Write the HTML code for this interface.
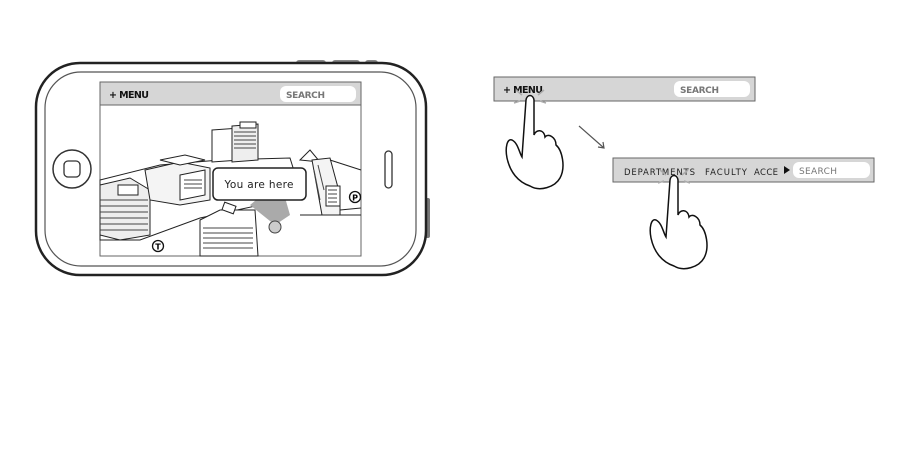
<!DOCTYPE html>
<html><head><style>
body{margin:0;width:918px;height:450px;background:#fff;overflow:hidden;font-family:"DejaVu Sans","Liberation Sans",sans-serif}
</style></head><body>
<svg width="918" height="450" viewBox="0 0 918 450" xmlns="http://www.w3.org/2000/svg" style="position:absolute;left:0;top:0">
<rect x="296" y="60" width="30" height="6" rx="3" fill="#888"/>
<rect x="332" y="60" width="28" height="6" rx="3" fill="#888"/>
<rect x="365" y="60" width="13" height="6" rx="3" fill="#888"/>
<rect x="424" y="198" width="6" height="40" rx="2" fill="#777"/>
<rect x="36" y="63" width="390" height="212" rx="44" fill="#fff" stroke="#222" stroke-width="2.5"/>
<rect x="45" y="72" width="371" height="194" rx="36" fill="#fff" stroke="#555" stroke-width="1.2"/>
<circle cx="72" cy="169" r="19" fill="#fff" stroke="#333" stroke-width="1.5"/>
<rect x="64" y="161" width="16" height="16" rx="4" fill="none" stroke="#333" stroke-width="1.3"/>
<rect x="385" y="151" width="7" height="37" rx="3.5" fill="#fff" stroke="#333" stroke-width="1.3"/>
<rect x="100" y="82" width="261" height="174" fill="#fff" stroke="#666"/>
<rect x="100" y="82" width="261" height="23" fill="#d6d6d6" stroke="#666"/>
<rect x="280" y="86" width="76" height="16" rx="6" fill="#fff"/>
<text x="109" y="98" font-size="9.5" font-weight="bold" fill="#111" textLength="40">+ MENU</text>
<text x="286" y="98" font-size="9" font-weight="bold" fill="#777" textLength="39">SEARCH</text>
<g fill="#fff" stroke="#222" stroke-width="1">
<path d="M100 180 L160 165 L220 160 L290 158 L300 190 L260 205 L200 218 L140 240 L100 240Z"/>
<path d="M100 185 L130 178 L150 190 L150 235 L120 240 L100 235Z" fill="#eee"/>
<path d="M100 200 h48 M100 206 h48 M100 212 h48 M100 218 h48 M100 224 h48 M100 230 h48" stroke="#444"/>
<rect x="118" y="185" width="20" height="10" fill="#fff"/>
<path d="M145 170 L180 162 L210 168 L210 200 L180 205 L150 200Z" fill="#f4f4f4"/>
<path d="M160 160 L185 155 L205 160 L180 165Z"/>
<path d="M180 175 L205 170 L205 195 L180 200Z"/>
<path d="M184 180 h18 M184 184 h18 M184 188 h18" stroke="#444"/>
<path d="M212 130 L240 128 L240 160 L212 162Z"/>
<path d="M232 126 L258 124 L258 160 L232 162Z" fill="#eee"/>
<path d="M234 132 h22 M234 136 h22 M234 140 h22 M234 144 h22 M234 148 h22" stroke="#444"/>
<path d="M240 122 h16 v6 h-16Z"/>
<path d="M300 160 L310 150 L320 162Z"/>
<path d="M312 160 L330 158 L340 195 L340 215 L322 215 Z" fill="#f4f4f4"/>
<path d="M318 165 L324 190 M314 170 L320 200" stroke="#444"/>
<rect x="326" y="186" width="14" height="20" fill="#fff"/>
<path d="M328 190 h9 M328 194 h9 M328 198 h9 M328 202 h9" stroke="#444"/>
<path d="M330 160 L361 170 M340 210 L361 208"/>
<path d="M200 220 L220 210 L255 210 L258 256 L200 256Z"/>
<path d="M203 228 h50 M203 233 h50 M203 238 h50 M203 243 h50 M203 248 h50" stroke="#444"/>
<path d="M250 205 L280 180 L290 215 L275 225Z" fill="#aaa" stroke="none"/>
<rect x="223" y="204" width="12" height="8" transform="rotate(20 229 208)"/>
<path d="M300 215 L361 215"/>
</g>
<circle cx="275" cy="227" r="6" fill="#ccc" stroke="#444"/>
<circle cx="158" cy="246" r="5.5" fill="#fff" stroke="#111" stroke-width="1.3"/>
<text x="158" y="249.5" font-size="8" font-weight="bold" text-anchor="middle">T</text>
<circle cx="355" cy="197" r="5.5" fill="#fff" stroke="#111" stroke-width="1.3"/>
<text x="355" y="200.5" font-size="8" font-weight="bold" text-anchor="middle">P</text>
<rect x="213" y="168" width="93" height="32" rx="5" fill="#fff" stroke="#222" stroke-width="1.5"/>
<text x="259" y="188" font-size="10.5" text-anchor="middle" fill="#222" textLength="69">You are here</text>
<rect x="494" y="77" width="261" height="24" fill="#d6d6d6" stroke="#666"/>
<rect x="674" y="81" width="76" height="16" rx="6" fill="#fff"/>
<text x="503" y="93" font-size="9.5" font-weight="bold" fill="#111" textLength="40">+ MENU</text>
<text x="680" y="93" font-size="9" font-weight="bold" fill="#777" textLength="39">SEARCH</text>
<path d="M579 126 L604 148 M598 147 L604 148 L603 142" stroke="#555" fill="none" stroke-width="1.2"/>
<rect x="613" y="158" width="261" height="24" fill="#d6d6d6" stroke="#666"/>
<rect x="793" y="162" width="77" height="16" rx="6" fill="#fff"/>
<text x="624" y="175" font-size="8.5" fill="#222" textLength="71">DEPARTMENTS</text>
<text x="705" y="175" font-size="8.5" fill="#222" textLength="42">FACULTY</text>
<text x="754" y="175" font-size="8.5" fill="#222" textLength="24">ACCE</text>
<path d="M784 166 L790 170 L784 174Z" fill="#111"/>
<text x="799" y="174" font-size="9" fill="#777" textLength="38">SEARCH</text>
<g fill="#fff" stroke="#111" stroke-width="1.5">
<path d="M530 186 C518 182 510 172 507 158 C505 148 507 138 512 140 C518 143 519 152 522 157 L526 100 C527 94 533 94 534 100 L534 135 C536 129 544 129 545 137 C548 133 556 137 556 145 C562 150 566 167 560 178 C555 187 540 192 530 186Z"/>
<path d="M674 266 C662 262 654 252 651 238 C649 228 651 218 656 220 C662 223 663 232 666 237 L670 180 C671 174 677 174 678 180 L678 215 C680 209 688 209 689 217 C692 213 700 217 700 225 C706 230 710 247 704 258 C699 267 684 272 674 266Z"/>
</g>
<g stroke="#aaa" stroke-width="1.5">
<path d="M522 95 L516 90 M538 95 L544 90 M520 101 L514 103 M540 101 L546 103"/>
<path d="M666 175 L660 170 M682 175 L688 170 M664 181 L658 183 M684 181 L690 183"/>
</g>
</svg>
</body></html>
